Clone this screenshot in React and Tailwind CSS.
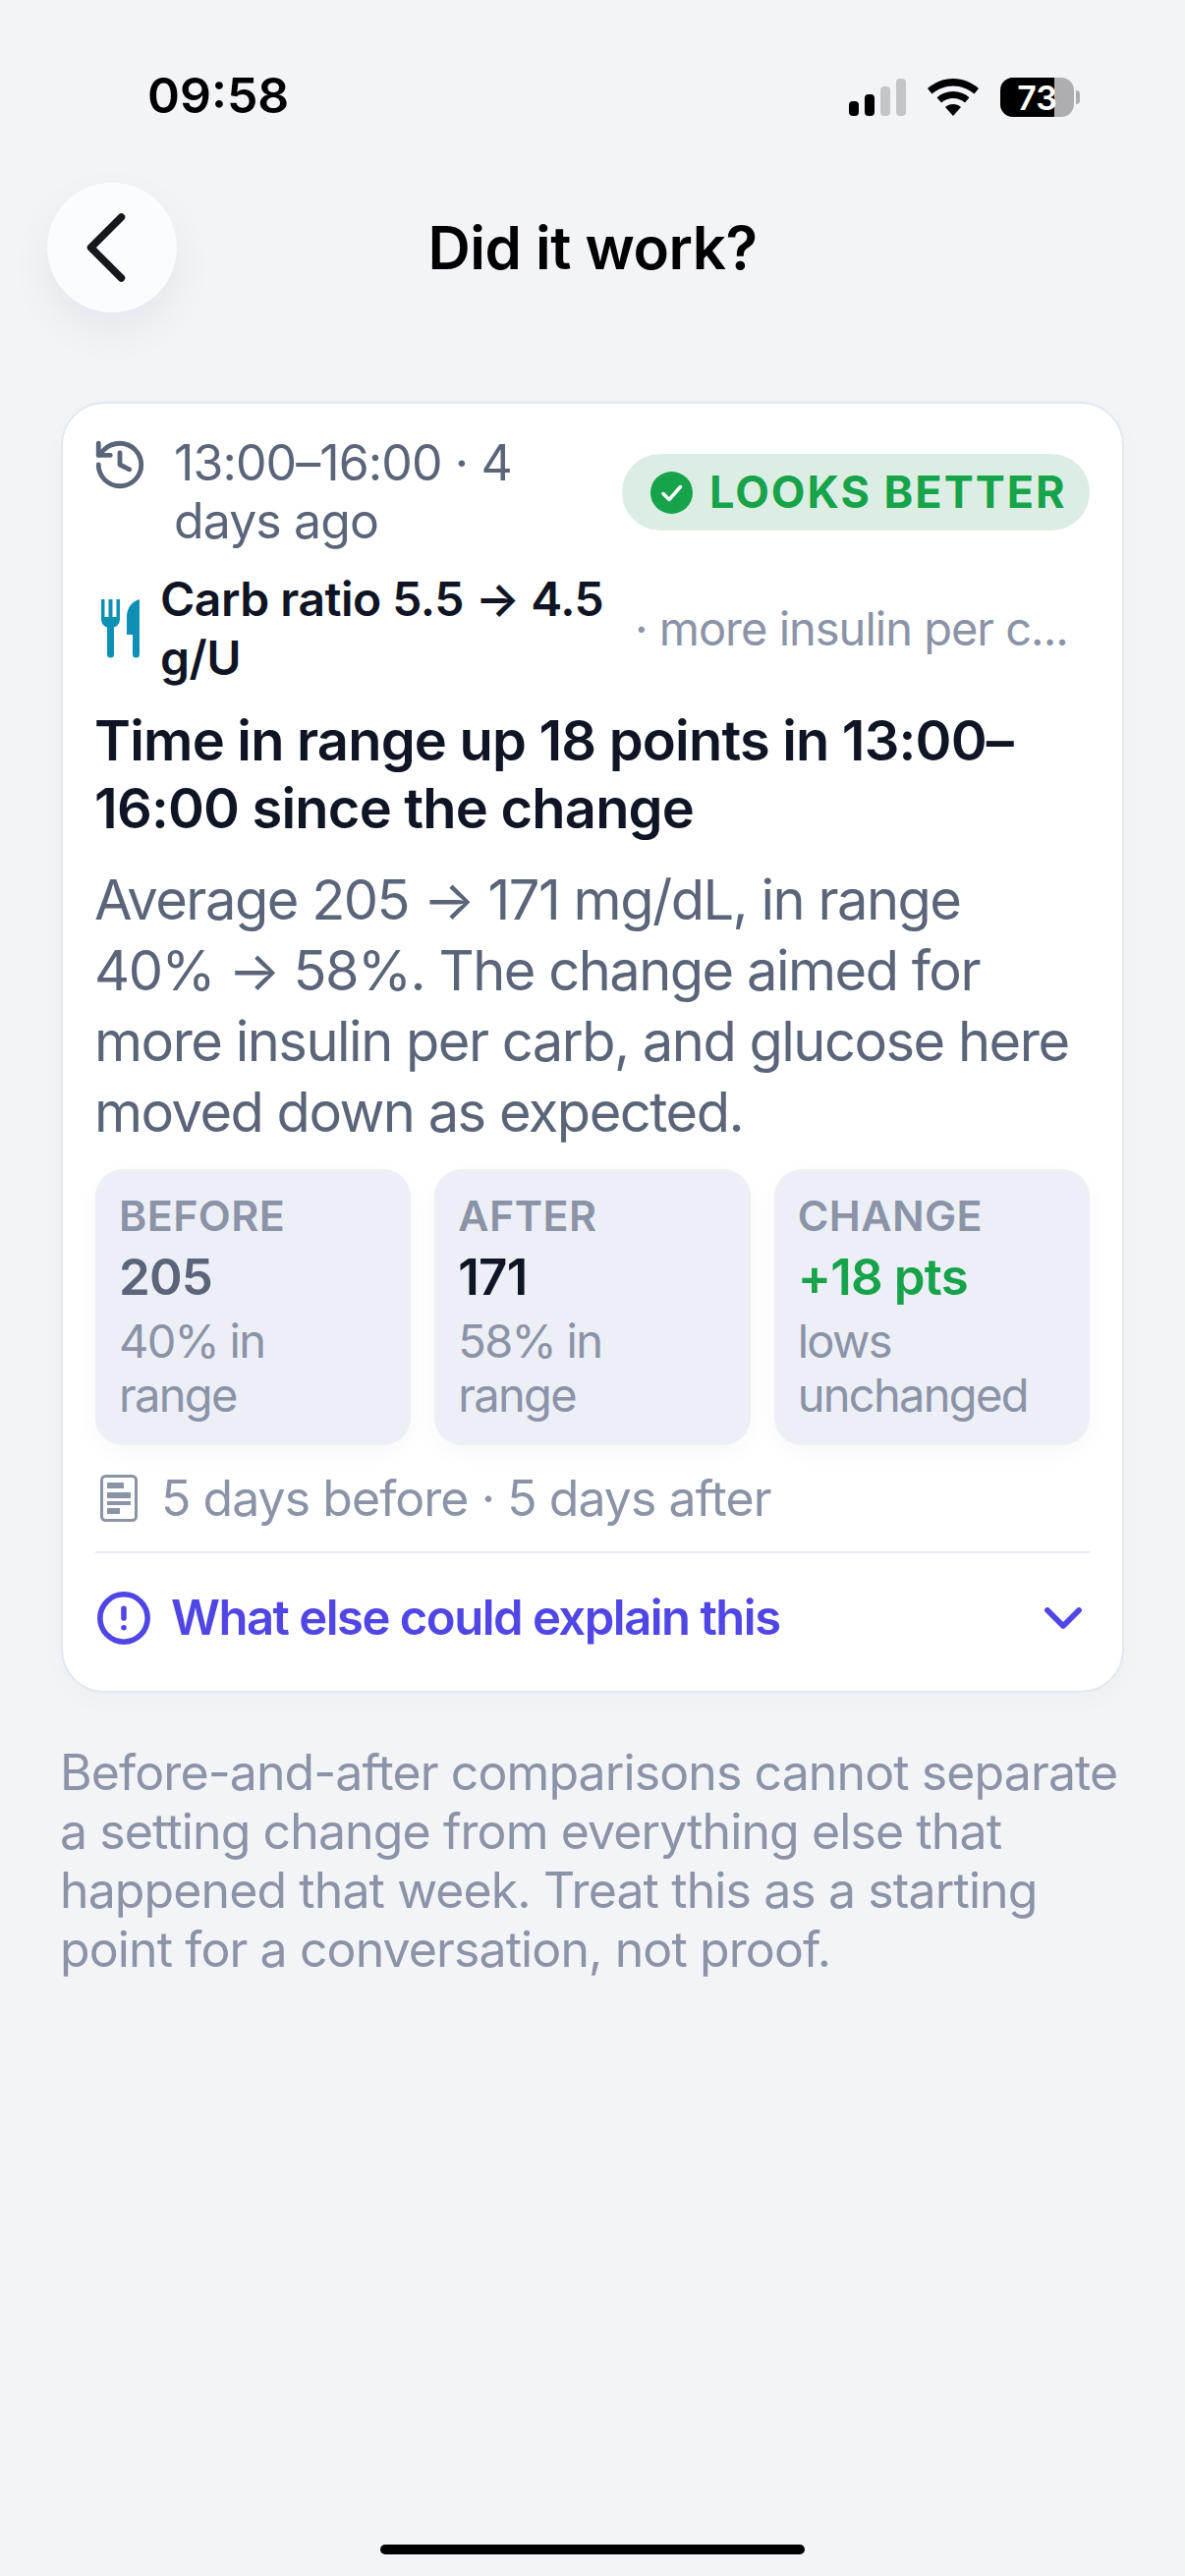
import { ChevronDown, ChevronLeft, CircleAlert, History } from "lucide-react";

// status bar glyphs
const Signal = () => (
  <svg width="58" height="38" viewBox="0 0 58 38">
    <rect x="0" y="23" width="10" height="15" rx="4" fill="#000" />
    <rect x="16" y="16" width="10" height="22" rx="4" fill="#000" />
    <rect x="32" y="8" width="10" height="30" rx="4" fill="#c4c5c8" />
    <rect x="48" y="0" width="10" height="38" rx="4" fill="#c4c5c8" />
  </svg>
);

const Wifi = () => (
  <svg width="52" height="38" viewBox="0 0 52 38">
    <path d="M26 0c10 0 19 4 26 10l-4.500 5.500C41.500 10.500 34 7.500 26 7.500S10.500 10.500 4.500 15.500L0 10C7 4 16 0 26 0z" fill="#000" />
    <path d="M26 13c6.500 0 12 2.300 16.500 6.200L38 24.500c-3.300-2.800-7.400-4.400-12-4.400s-8.700 1.600-12 4.400l-4.500-5.300C14 15.300 19.500 13 26 13z" fill="#000" />
    <path d="M26 26c3 0 5.800 1 8 2.900L26 38l-8-9.100c2.200-1.900 5-2.900 8-2.900z" fill="#000" />
  </svg>
);

const Battery = () => (
  <div className="flex items-center gap-[2px]">
    <div className="relative flex h-[40px] w-[75px] overflow-hidden rounded-[13px] bg-[#aeaeb2]">
      <div className="h-full w-[55px] bg-black" />
      <span className="absolute inset-0 flex items-center justify-center text-[34px] font-semibold text-white">73</span>
    </div>
    <div className="h-[14px] w-[4px] rounded-r-full bg-[#aeaeb2]" />
  </div>
);

const FoodIcon = () => (
  <svg width="39" height="60" viewBox="0 0 39 60" className="ml-[6px] shrink-0" fill="#0e8fb5">
    <path d="M0 0h3.500v18h4V0h4v18h4V0H19v20c0 4.500-2.500 7.500-6 8.500V56a3.500 3.500 0 0 1-7 0V28.500C2.500 27.500 0 24.500 0 20z" />
    <path d="M39 0v56a3.500 3.500 0 0 1-7 0V36h-6V18C26 9 31 2 39 0z" />
  </svg>
);

const CheckBadge = () => (
  <svg width="43" height="43" viewBox="0 0 43 43" className="shrink-0">
    <circle cx="21.500" cy="21.500" r="21.500" fill="#16a34a" />
    <path d="M13 22.500l6 6L30.500 15.500" fill="none" stroke="#fff" strokeWidth="3.500" strokeLinecap="round" strokeLinejoin="round" />
  </svg>
);

const DocIcon = () => (
  <svg width="38" height="48" viewBox="0 0 38 48" className="ml-[5px] shrink-0">
    <rect x="1.500" y="1.500" width="35" height="45" rx="4" fill="none" stroke="#8b93a7" strokeWidth="3" />
    <rect x="7" y="8" width="17" height="6" fill="#8b93a7" />
    <rect x="7" y="18" width="24" height="6" fill="#8b93a7" />
    <rect x="7" y="27" width="24" height="4" fill="#8b93a7" />
    <rect x="7" y="34" width="13" height="6" fill="#8b93a7" />
  </svg>
);

const stats = [
  { label: "BEFORE", value: "205", sub: "40% in range", color: "text-[#5b6579]" },
  { label: "AFTER", value: "171", sub: "58% in range", color: "text-[#0f1524]" },
  { label: "CHANGE", value: "+18 pts", sub: "lows unchanged", color: "text-[#16a34a]" },
];

export default function App() {
  return (
    <div className="flex min-h-[2622px] w-[1206px] flex-col bg-[#f2f4f8] font-['Inter',sans-serif]">
      {/* Status bar */}
      <div className="flex h-[186px] items-start justify-between pl-[150px] pr-[107px] pt-[66px]">
        <span className="text-[50px] font-semibold leading-[62px] text-black">09:58</span>
        <div className="flex items-center gap-[22px] pt-[13px]">
          <Signal />
          <Wifi />
          <Battery />
        </div>
      </div>

      {/* Header */}
      <div className="relative flex h-[132px] items-center justify-center">
        <button className="absolute left-[48px] top-0 flex h-[132px] w-[132px] items-center justify-center rounded-full bg-[#fbfcfe] shadow-[0_18px_44px_rgba(20,25,40,0.06)]">
          <ChevronLeft size={124} strokeWidth={1.45} className="mr-[12px] shrink-0 text-[#16181d]" />
        </button>
        <h1 className="text-[60px] font-semibold tracking-[-0.5px] text-black">Did it work?</h1>
      </div>

      {/* Result card */}
      <div className="mx-[62px] mt-[91px] flex flex-col rounded-[44px] border-2 border-[#e2e7f0] bg-white px-[33px] pb-[8px] pt-[34px] shadow-[0_8px_30px_rgba(20,25,40,0.02)]">
        <div className="flex items-start justify-between">
          <div className="flex w-[530px] items-start gap-[26px]">
            <History size={58} strokeWidth={2} className="-mt-[1px] -ml-[4px] shrink-0 text-[#5b6579]" />
            <span className="-mt-[3px] text-[50px] leading-[59px] tracking-[-0.9px] text-[#5b6579]">13:00–16:00 · 4 days ago</span>
          </div>
          <div className="mt-[17px] flex h-[78px] w-[476px] items-center gap-[17px] rounded-full bg-[#dceee3] pl-[29px]">
            <CheckBadge />
            <span className="text-[45px] font-bold tracking-[2px] text-[#16a34a]">LOOKS BETTER</span>
          </div>
        </div>

        <div className="mt-[20px] flex items-center">
          <FoodIcon />
          <span className="ml-[21px] w-[483px] shrink-0 text-[48px] font-semibold leading-[60px] tracking-[-0.5px] text-[#0f1524]">Carb ratio 5.5 → 4.5 g/U</span>
          <span className="whitespace-nowrap text-[47px] tracking-[-1px] text-[#8b93a7]">· more insulin per c...</span>
        </div>

        <h2 className="-ml-px mt-[20px] text-[56px] font-semibold leading-[69px] tracking-[-0.8px] text-[#0f1524]">Time in range up 18 points in 13:00–16:00 since the change</h2>

        <p className="-ml-px mt-[22px] text-[56px] leading-[72px] tracking-[-1.5px] text-[#5b6579]">Average 205 → 171 mg/dL, in range 40% → 58%. The change aimed for more insulin per carb, and glucose here moved down as expected.</p>

        <div className="mt-[22px] grid grid-cols-3 gap-[24px]">
          {stats.map((s) => (
            <div key={s.label} className="flex h-[281px] flex-col rounded-[28px] bg-[#eceff6] px-[24px] pt-[21px] shadow-[0_8px_24px_rgba(20,25,40,0.03)]">
              <span className="text-[43px] font-semibold leading-[52px] tracking-[0.4px] text-[#8b93a7]">{s.label}</span>
              <span className={`mt-[8px] text-[51px] font-semibold leading-[58px] tracking-[-0.8px] ${s.color}`}>{s.value}</span>
              <span className="mt-[8px] text-[47px] leading-[55px] tracking-[-1.7px] text-[#8b93a7]">{s.sub}</span>
            </div>
          ))}
        </div>

        <div className="mt-[25px] flex items-center gap-[24px]">
          <DocIcon />
          <span className="text-[50px] leading-[58px] tracking-[-0.95px] text-[#8b93a7]">5 days before · 5 days after</span>
        </div>

        <div className="mt-[25px] border-t-2 border-[#e6eaf1]" />

        <div className="flex h-[132px] items-center">
          <CircleAlert size={58} strokeWidth={2.3} className="mr-[19px] shrink-0 text-[#4f46e5]" />
          <span className="text-[49px] font-semibold tracking-[-1.5px] text-[#4f46e5]">What else could explain this</span>
          <ChevronDown size={64} strokeWidth={2.2} className="ml-auto -mr-[5px] text-[#4f46e5]" />
        </div>
      </div>

      <p className="ml-[61px] mr-[58px] mt-[51px] text-[50px] leading-[60px] tracking-[-0.9px] text-[#8b93a7]">Before-and-after comparisons cannot separate a setting change from everything else that happened that week. Treat this as a starting point for a conversation, not proof.</p>

      {/* Home indicator */}
      <div className="mt-auto flex justify-center pb-[22px]">
        <div className="h-[10px] w-[432px] rounded-full bg-black" />
      </div>
    </div>
  );
}
